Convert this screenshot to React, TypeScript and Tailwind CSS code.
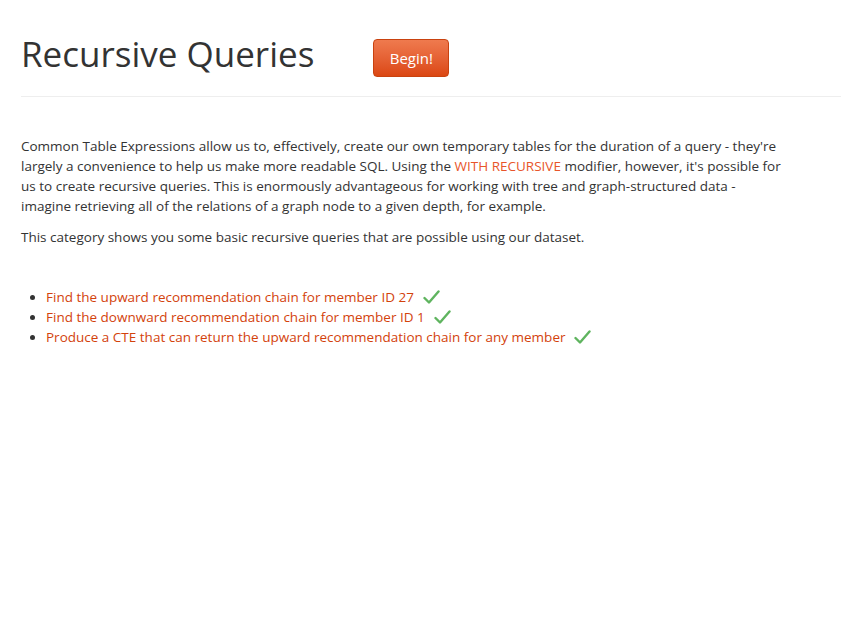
const questions = [
  { id: 1, title: 'Find the upward recommendation chain for member ID 27' },
  { id: 2, title: 'Find the downward recommendation chain for member ID 1' },
  { id: 3, title: 'Produce a CTE that can return the upward recommendation chain for any member' },
];

function Check() {
  return (
    <svg width="17" height="15" viewBox="0 0 17 15" className="ml-[9px] inline-block align-[-3px]">
      <path d="M1.5 8 L6 12.5 L15.5 1.5" fill="none" stroke="#5fb45f" strokeWidth="2.4" strokeLinecap="round" strokeLinejoin="round" />
    </svg>
  );
}

export default function App() {
  return (
    <div className="min-h-screen bg-white pl-[21px] pt-[34px] text-[13.5px] leading-[20px] text-[#333] [font-family:'Open_Sans',sans-serif]">
      <div className="flex items-start border-b border-[#eee] pb-[19px]">
        <h1 className="-mt-[2px] text-[35px] leading-[44px] font-normal text-[#333]">Recursive Queries</h1>
        <button className="ml-[59px] mt-[5px] h-[38px] w-[76px] rounded-[4px] border border-[#c9420f] bg-gradient-to-b from-[#ef7a4e] to-[#db4711] text-[15px] text-white">
          Begin!
        </button>
      </div>

      <div className="mt-[39px] w-[765px]">
        <p className="mb-[11px]">
          Common Table Expressions allow us to, effectively, create our own temporary tables for the duration of a query - they're largely a convenience to help us make more readable SQL. Using the{' '}
          <span className="text-[#e8552a]">WITH RECURSIVE</span> modifier, however, it's possible for us to create recursive queries. This is enormously advantageous for working with tree and graph-structured data - imagine retrieving all of the relations of a graph node to a given depth, for example.
        </p>
        <p>This category shows you some basic recursive queries that are possible using our dataset.</p>
      </div>

      <ul className="mt-[40px] list-disc pl-[25px]">
        {questions.map((q) => (
          <li key={q.id}>
            <a className="text-[#d3420c]">{q.title}</a>
            <Check />
          </li>
        ))}
      </ul>
    </div>
  );
}
